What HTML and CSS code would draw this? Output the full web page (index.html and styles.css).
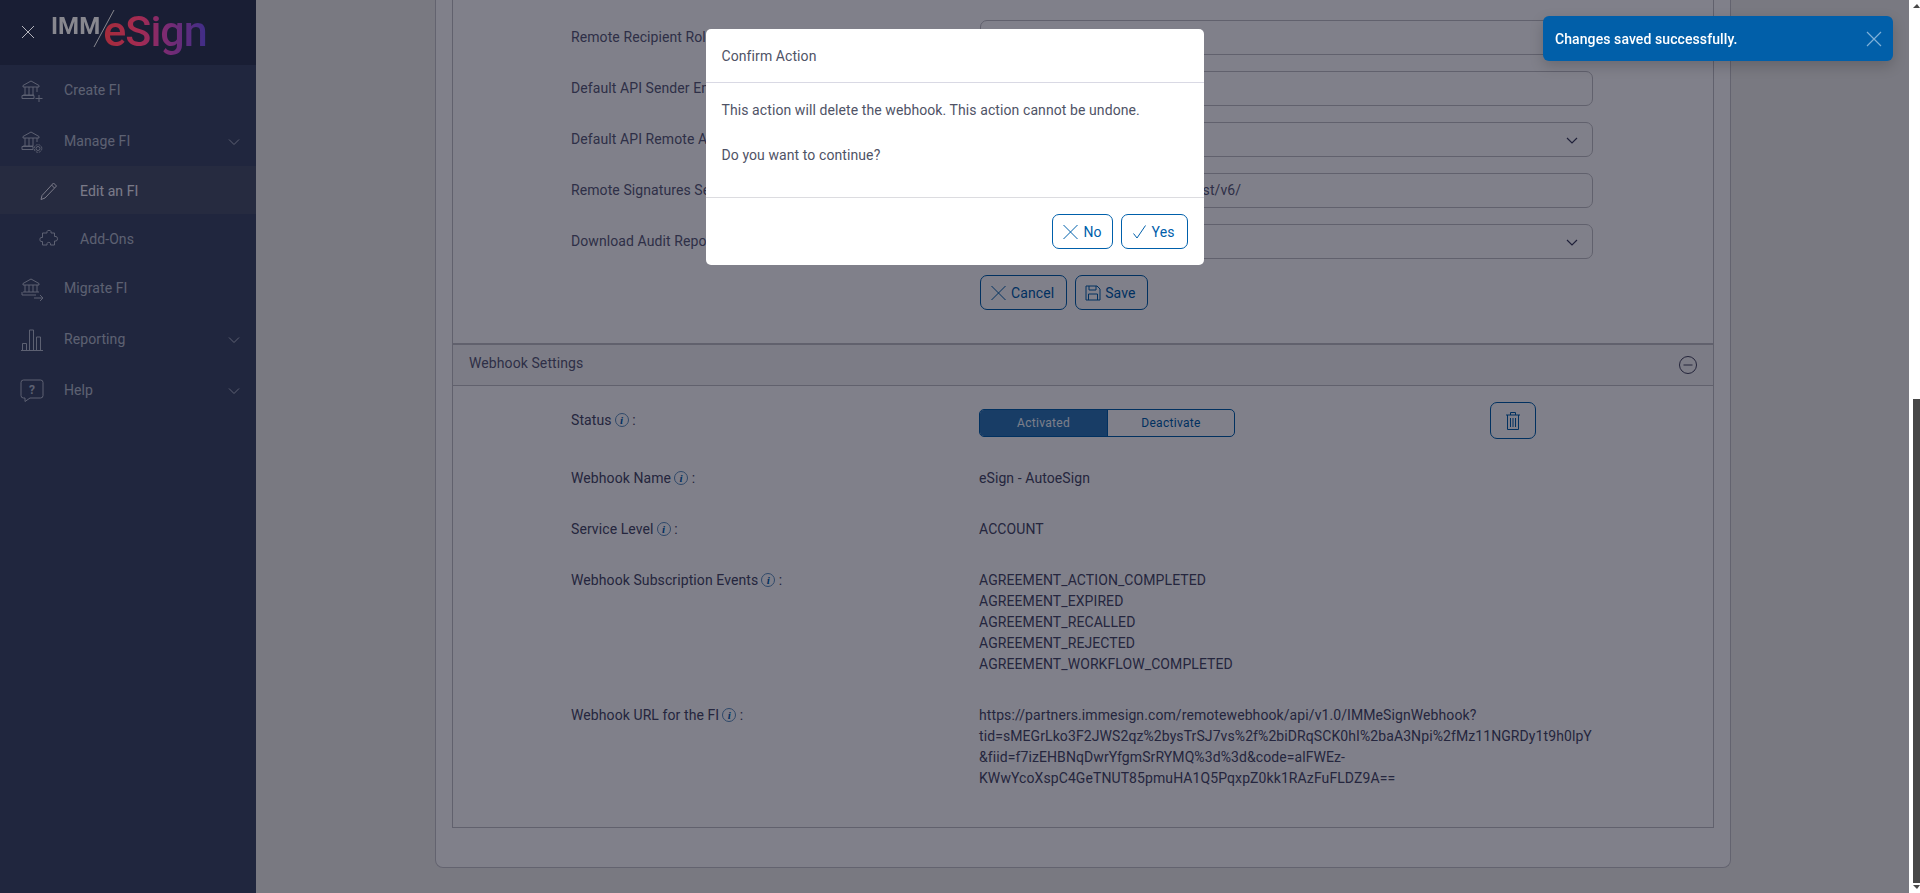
FILE: index.html
```html
<!DOCTYPE html>
<html lang="en">
<head>
    <meta charset="UTF-8">
    <title>IMM eSign - Edit an FI</title>
    <link rel="stylesheet" href="styles.css">
</head>
<body>
    <div class="app">
        <aside class="sidebar">
            <div class="sidebar-top">
                <svg class="close-icon" width="16" height="16" viewBox="0 0 16 16"><path d="M2 2l12 12M14 2L2 14"/></svg>
                <div class="logo">
                    <span class="logo-imm">IMM</span>
                    <svg class="logo-slash" width="24" height="40" viewBox="0 0 24 40"><path d="M22 1L2 38"/></svg>
                    <span class="logo-esign">eSign</span>
                </div>
            </div>
            <nav class="nav">
                <a class="nav-item">
                    <svg class="nav-icon" width="24" height="24" viewBox="0 0 24 24"><path d="M3 6.500L11 2l8 4.500V8H3zM5 8v8M9 8v8M13 8v8M17 8v5M3 16h11M2 19.500h12v-3H2zM19 16v7M15.500 19.500h7"/></svg>
                    <span>Create FI</span>
                </a>
                <a class="nav-item">
                    <svg class="nav-icon" width="24" height="24" viewBox="0 0 24 24"><path d="M3 6.500L11 2l8 4.500V8H3zM5 8v8M9 8v8M13 8v8M17 8v4M3 16h10M2 19.500h11v-3H2z"/><circle cx="18" cy="18.500" r="2"/><circle cx="18" cy="18.500" r="3.800" stroke-dasharray="2 1"/></svg>
                    <span>Manage FI</span>
                    <svg class="nav-chevron" width="12" height="8" viewBox="0 0 12 8"><path d="M1 1.500l5 5 5-5"/></svg>
                </a>
                <div class="subnav">
                    <a class="nav-item sub-item active">
                        <svg class="nav-icon" width="20" height="20" viewBox="0 0 20 20"><path d="M14.500 2l3 3L6 17l-4 1.500L3 14.500zM12.500 4l3 3"/></svg>
                        <span>Edit an FI</span>
                    </a>
                </div>
                <a class="nav-item sub-item addons">
                    <svg class="nav-icon" width="20" height="20" viewBox="0 0 20 20"><path d="M8 4V2.500C8 1 12 1 12 2.500V4h3.500v3.500H17c2 0 2 4.500 0 4.500h-1.500v4h-4v-1.500c0-1.500-3.500-1.500-3.500 0V16H3.500v-3.500H2c-1.500 0-1.500-4 0-4h1.500V4z"/></svg>
                    <span>Add-Ons</span>
                </a>
                <a class="nav-item">
                    <svg class="nav-icon" width="24" height="24" viewBox="0 0 24 24"><path d="M3 6.500L11 2l8 4.500V8H3zM5 8v7M9 8v7M13 8v7M17 8v7M3 15h16M2 18h14M2 18v-3M14 21h9M20 18l3 3-3 3"/></svg>
                    <span>Migrate FI</span>
                </a>
                <a class="nav-item">
                    <svg class="nav-icon" width="24" height="24" viewBox="0 0 24 24"><path d="M1 22.500h22M2.500 22.500v-7h4v7M9.500 22.500V2h4v20.500M16.500 22.500V9h4v13.500"/></svg>
                    <span>Reporting</span>
                    <svg class="nav-chevron" width="12" height="8" viewBox="0 0 12 8"><path d="M1 1.500l5 5 5-5"/></svg>
                </a>
                <a class="nav-item">
                    <svg class="nav-icon" width="24" height="24" viewBox="0 0 24 24"><path d="M3.500 1h17a2.500 2.500 0 0 1 2.500 2.500v13a2.500 2.500 0 0 1-2.500 2.500H10l-5 3.500V19H3.500A2.500 2.500 0 0 1 1 16.500v-13A2.500 2.500 0 0 1 3.500 1z"/><text class="help-mark" x="12" y="14.500" text-anchor="middle">?</text></svg>
                    <span>Help</span>
                    <svg class="nav-chevron" width="12" height="8" viewBox="0 0 12 8"><path d="M1 1.500l5 5 5-5"/></svg>
                </a>
            </nav>
        </aside>

        <main class="main">
            <div class="card">
                <div class="panel">
                    <div class="form-body">
                        <div class="form-row">
                            <label>Remote Recipient Role :</label>
                            <div class="field"></div>
                        </div>
                        <div class="form-row">
                            <label>Default API Sender Email :</label>
                            <div class="field"></div>
                        </div>
                        <div class="form-row">
                            <label>Default API Remote Account :</label>
                            <div class="field">
                                <svg class="select-chevron" width="14" height="9" viewBox="0 0 14 9"><path d="M2 2l5 5 5-5"/></svg>
                            </div>
                        </div>
                        <div class="form-row">
                            <label>Remote Signatures Service URL :</label>
                            <div class="field">https://api.adobesign.com/api/rest/v6/</div>
                        </div>
                        <div class="form-row">
                            <label>Download Audit Report :</label>
                            <div class="field">
                                <svg class="select-chevron" width="14" height="9" viewBox="0 0 14 9"><path d="M2 2l5 5 5-5"/></svg>
                            </div>
                        </div>
                        <div class="form-actions">
                            <button class="btn">
                                <svg width="17" height="18" viewBox="0 0 17 18"><path d="M1.500 2l14 14M15.500 2l-14 14"/></svg>
                                Cancel
                            </button>
                            <button class="btn">
                                <svg width="16" height="16" viewBox="0 0 16 16"><path d="M1 1h11l3 3v11H1zM4 1v4h7V1M3.500 15V9h9v6"/></svg>
                                Save
                            </button>
                        </div>
                    </div>

                    <div class="section-header">
                        <span>Webhook Settings</span>
                        <svg class="collapse-icon" width="20" height="20" viewBox="0 0 20 20"><circle cx="10" cy="10" r="8.500"/><path d="M5.500 10h9"/></svg>
                    </div>

                    <div class="details">
                        <div class="detail-row status-row">
                            <div class="detail-label">Status<i class="info">i</i> :</div>
                            <div class="status-value">
                                <div class="toggle">
                                    <span class="toggle-on">Activated</span>
                                    <span class="toggle-off">Deactivate</span>
                                </div>
                                <button class="trash-btn">
                                    <svg width="16" height="20" viewBox="0 0 16 20"><path d="M1 4h14M5.500 4V1.500h5V4M2.500 4v14.500h11V4M5.500 7v9M8 7v9M10.500 7v9"/></svg>
                                </button>
                            </div>
                        </div>
                        <div class="detail-row">
                            <div class="detail-label">Webhook Name<i class="info">i</i> :</div>
                            <div>eSign - AutoeSign</div>
                        </div>
                        <div class="detail-row">
                            <div class="detail-label">Service Level<i class="info">i</i> :</div>
                            <div>ACCOUNT</div>
                        </div>
                        <div class="detail-row">
                            <div class="detail-label">Webhook Subscription Events<i class="info">i</i> :</div>
                            <div>
                                <div>AGREEMENT_ACTION_COMPLETED</div>
                                <div>AGREEMENT_EXPIRED</div>
                                <div>AGREEMENT_RECALLED</div>
                                <div>AGREEMENT_REJECTED</div>
                                <div>AGREEMENT_WORKFLOW_COMPLETED</div>
                            </div>
                        </div>
                        <div class="detail-row">
                            <div class="detail-label">Webhook URL for the FI<i class="info">i</i> :</div>
                            <div>
                                <div>https://partners.immesign.com/remotewebhook/api/v1.0/IMMeSignWebhook?</div>
                                <div>tid=sMEGrLko3F2JWS2qz%2bysTrSJ7vs%2f%2biDRqSCK0hI%2baA3Npi%2fMz11NGRDy1t9h0lpY</div>
                                <div>&amp;fiid=f7izEHBNqDwrYfgmSrRYMQ%3d%3d&amp;code=alFWEz-</div>
                                <div>KWwYcoXspC4GeTNUT85pmuHA1Q5PqxpZ0kk1RAzFuFLDZ9A==</div>
                            </div>
                        </div>
                    </div>
                </div>
            </div>
        </main>

        <div class="scrollbar">
            <span class="arrow-up"></span>
            <span class="thumb"></span>
            <span class="arrow-down"></span>
        </div>
    </div>

    <div class="overlay">
        <div class="modal">
            <div class="modal-header">Confirm Action</div>
            <div class="modal-body">
                This action will delete the webhook. This action cannot be undone.<br><br>
                Do you want to continue?
            </div>
            <div class="modal-footer">
                <button class="btn btn-no">
                    <svg width="17" height="16" viewBox="0 0 17 16"><path d="M1.500 1l14 14M15.500 1l-14 14"/></svg>
                    No
                </button>
                <button class="btn">
                    <svg width="17" height="16" viewBox="0 0 17 16"><path d="M2.500 9.500L6 14l8.500-12.500"/></svg>
                    Yes
                </button>
            </div>
        </div>
        <div class="toast">
            <span>Changes saved successfully.</span>
            <svg width="16" height="16" viewBox="0 0 16 16"><path d="M1 1l14 14M15 1L1 15"/></svg>
        </div>
    </div>
</body>
</html>
```

FILE: styles.css
```css
* {
    box-sizing: border-box;
}
html, body {
    margin: 0;
    height: 100%;
    overflow: hidden;
}
body {
    font-family: Roboto, "Liberation Sans", sans-serif;
    font-size: 14px;
    line-height: 21px;
    letter-spacing: 0.09px;
    color: #5b5d78;
    background-color: #f1f1ed;
}
svg {
    fill: none;
    stroke: currentColor;
    stroke-width: 1;
}
.app {
    display: flex;
    height: 100vh;
}

/* sidebar */
.sidebar {
    width: 256px;
    flex-shrink: 0;
    background-color: #3f4b67;
    color: #b9c0ce;
}
.sidebar-top {
    height: 65px;
    display: flex;
    align-items: center;
    background-color: #313b53;
    padding: 0 0 1px 20px;
}
.close-icon {
    color: #b4b4bc;
    position: relative;
    z-index: 30;
}
.logo {
    position: relative;
    z-index: 30;
    display: flex;
    align-items: flex-start;
    height: 64px;
    margin-left: 15px;
}
.logo-imm {
    font-size: 24px;
    font-weight: 700;
    line-height: 24px;
    color: #88888f;
    margin-top: 14px;
}
.logo-slash {
    color: #88888f;
    margin: 9px 0 0 -8px;
}
.logo-esign {
    font-size: 43px;
    font-weight: 500;
    line-height: 50px;
    margin: 6px 0 0 -13px;
    letter-spacing: -1px;
    background: linear-gradient(90deg, #a52c3a 0%, #a32b52 35%, #7c2b72 60%, #3e2e88 100%);
    -webkit-background-clip: text;
    background-clip: text;
    color: transparent;
}
.nav-item {
    display: flex;
    align-items: center;
    height: 51px;
    padding-left: 20px;
    position: relative;
}
.nav-icon {
    flex-shrink: 0;
    margin-right: 20px;
}
.nav-chevron {
    position: absolute;
    left: 228px;
    top: 22px;
}
.help-mark {
    font-size: 12px;
    font-weight: 700;
    fill: currentColor;
    stroke: none;
}
.subnav {
    margin-top: -1px;
    background-color: #4b556b;
}
.sub-item {
    height: 48px;
    padding-left: 39px;
}
.sub-item .nav-icon {
    margin-right: 21px;
}
.sub-item.active {
    padding-top: 2px;
    color: #f3f3fb;
}
.addons {
    margin-top: 1px;
}

/* main content */
.main {
    flex: 1;
    min-width: 0;
    padding-left: 179px;
    padding-right: 178px;
}
.card {
    background-color: #ffffff;
    border: 1px solid #c4c4c8;
    border-top: 0;
    border-radius: 0 0 8px 8px;
    padding: 0 16px 40px 16px;
    height: 868px;
}
.panel {
    border: 1px solid #c0c0c4;
    border-top: 0;
    height: 828px;
}
.form-body {
    padding: 20px 0 33px 118px;
}
.form-row {
    display: grid;
    grid-template-columns: 409px 613px;
    align-items: center;
    margin-bottom: 16px;
}
.field {
    height: 35px;
    border: 1px solid #c0c0c4;
    border-radius: 7px;
    padding: 6px 12px;
    position: relative;
}
.select-chevron {
    position: absolute;
    right: 13px;
    top: 13px;
    color: #3c3f5c;
    stroke-width: 1.2;
}
.form-actions {
    margin-left: 409px;
    display: flex;
    gap: 8px;
}
.btn {
    height: 35px;
    display: inline-flex;
    align-items: center;
    gap: 4px;
    padding: 0 12px 0 9px;
    font-family: inherit;
    font-size: 14px;
    letter-spacing: inherit;
    color: #0060ab;
    background-color: transparent;
    border: 1px solid #0060ab;
    border-radius: 7px;
}
.btn-no {
    padding-right: 10px;
}
.section-header {
    height: 43px;
    display: flex;
    align-items: center;
    justify-content: space-between;
    border-top: 2px solid #c0c0c4;
    border-bottom: 1px solid #c0c0c4;
    background-color: #f7f7f6;
    padding: 0 15px 0 16px;
}
.section-header span {
    margin-bottom: 4px;
}
.collapse-icon {
    color: #45465f;
}
.details {
    padding: 16px 0 0 118px;
}
.detail-row {
    display: grid;
    grid-template-columns: 408px 614px;
    margin-bottom: 30px;
    color: #484a66;
}
.detail-label {
    color: #484a66;
}
.info {
    display: inline-block;
    width: 14px;
    height: 14px;
    margin-left: 3px;
    border: 1px solid #5c8fbc;
    border-radius: 50%;
    font-family: "Liberation Serif", serif;
    font-size: 11px;
    font-weight: 700;
    line-height: 12px;
    text-align: center;
    color: #0060ab;
    vertical-align: 1px;
}
.status-row {
    align-items: start;
    margin-bottom: 29px;
}
.status-row .detail-label {
    padding-top: 8px;
}
.status-value {
    display: flex;
    justify-content: space-between;
    padding-right: 57px;
}
.toggle {
    display: flex;
    width: 256px;
    height: 28px;
    margin-top: 7px;
    border: 1px solid #0060ab;
    border-radius: 5px;
    overflow: hidden;
    font-size: 12px;
    letter-spacing: 0.3px;
    line-height: 26px;
    text-align: center;
}
.toggle-on {
    width: 127px;
    background-color: #2f79b7;
    color: #f4fbff;
}
.toggle-off {
    flex: 1;
    color: #0060ab;
    border-left: 1px solid #0060ab;
}
.trash-btn {
    width: 46px;
    height: 37px;
    padding: 0;
    display: flex;
    align-items: center;
    justify-content: center;
    color: #0060ab;
    background-color: transparent;
    border: 1px solid #0060ab;
    border-radius: 7px;
}

/* fake scrollbar of the screenshot */
.scrollbar {
    width: 11px;
    flex-shrink: 0;
    background-color: #ffffff;
    position: relative;
}
.thumb {
    position: absolute;
    top: 399px;
    right: 0;
    width: 7px;
    height: 484px;
    background-color: #484848;
}
.arrow-up, .arrow-down {
    position: absolute;
    right: 0;
    width: 0;
    height: 0;
    border-left: 4px solid transparent;
    border-right: 3px solid transparent;
}
.arrow-up {
    top: 4px;
    border-bottom: 4px solid #484848;
}
.arrow-down {
    bottom: 4px;
    border-top: 4px solid #484848;
}

/* modal layer */
.overlay {
    position: fixed;
    top: 0;
    left: 0;
    right: 11px;
    bottom: 0;
    z-index: 20;
    background-color: rgba(1, 1, 21, 0.5);
    display: flex;
    justify-content: center;
    align-items: flex-start;
    padding-top: 29px;
}
.modal {
    width: 498px;
    background-color: #ffffff;
    border-radius: 5px;
    color: #4f5366;
}
.modal-header {
    height: 54px;
    padding: 16px;
    line-height: 22px;
    border-bottom: 1px solid #d9d9e4;
}
.modal-body {
    height: 115px;
    padding: 16px;
    line-height: 22.5px;
    border-bottom: 1px solid #dcdce0;
}
.modal-footer {
    display: flex;
    justify-content: flex-end;
    gap: 8px;
    padding: 16px;
}
.toast {
    position: absolute;
    top: 16px;
    right: 16px;
    width: 350px;
    height: 45px;
    display: flex;
    align-items: center;
    justify-content: space-between;
    padding: 1px 11px 0 12px;
    background-color: #015fa9;
    color: #ffffff;
    font-weight: 500;
    border-radius: 6px;
    box-shadow: 0 5px 14px rgba(0, 0, 0, 0.18);
}
.toast svg {
    color: #7fb0d8;
    stroke-width: 1.2;
}
```
